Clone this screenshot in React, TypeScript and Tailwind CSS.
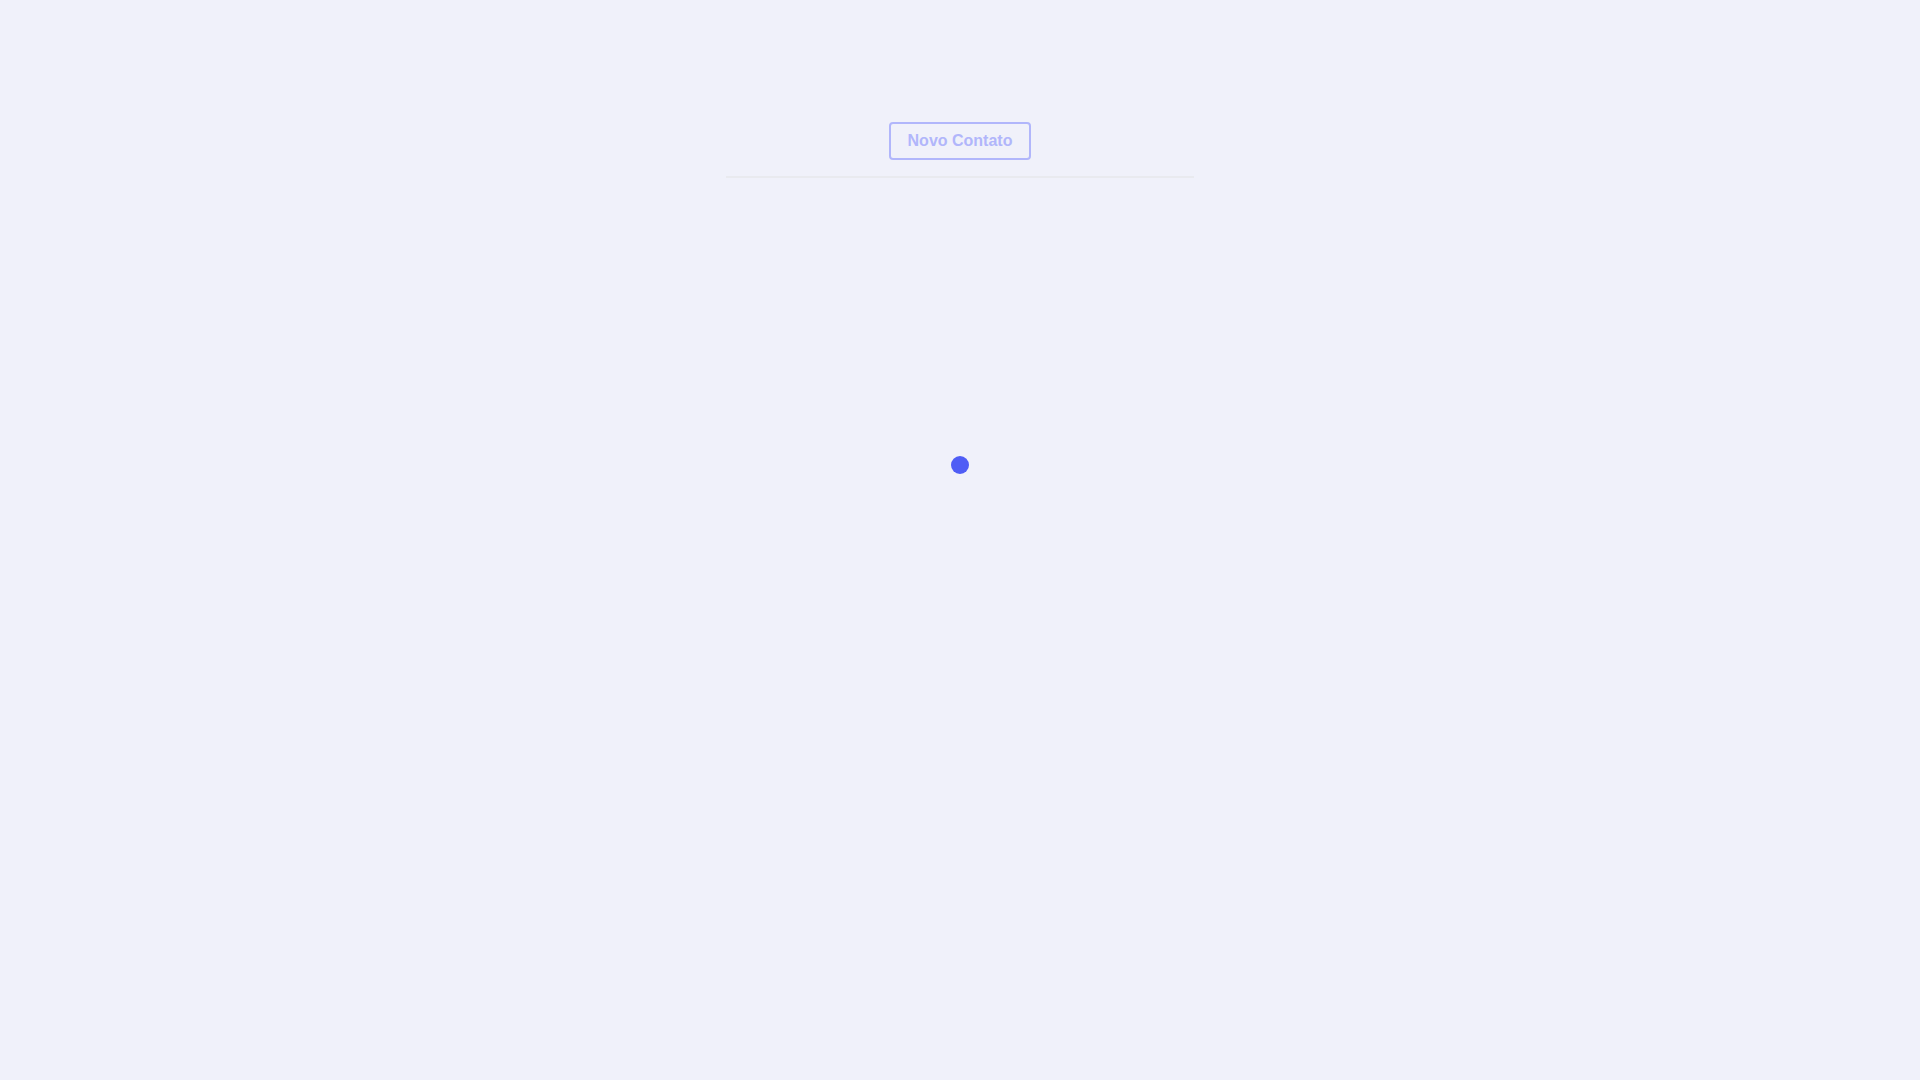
export default function App() {
  return (
    <div className="min-h-screen w-full bg-[#f0f1fa] flex flex-col items-center" style={{ fontFamily: '"Liberation Sans", Arial, sans-serif' }}>
      <div className="w-[468px] pt-[122px]">
        <div className="flex justify-center pb-[16px] border-b-2 border-[#e9eaef]">
          <button className="h-[38px] px-[17px] border-2 border-[#b1b6fb] rounded-[4px] text-[16px] font-bold text-[#b1b6fb] leading-none bg-transparent">
            Novo Contato
          </button>
        </div>
        <div className="flex justify-center pt-[278px]">
          <div className="w-[18px] h-[18px] rounded-full bg-[#4f5df5]" />
        </div>
      </div>
    </div>
  );
}
